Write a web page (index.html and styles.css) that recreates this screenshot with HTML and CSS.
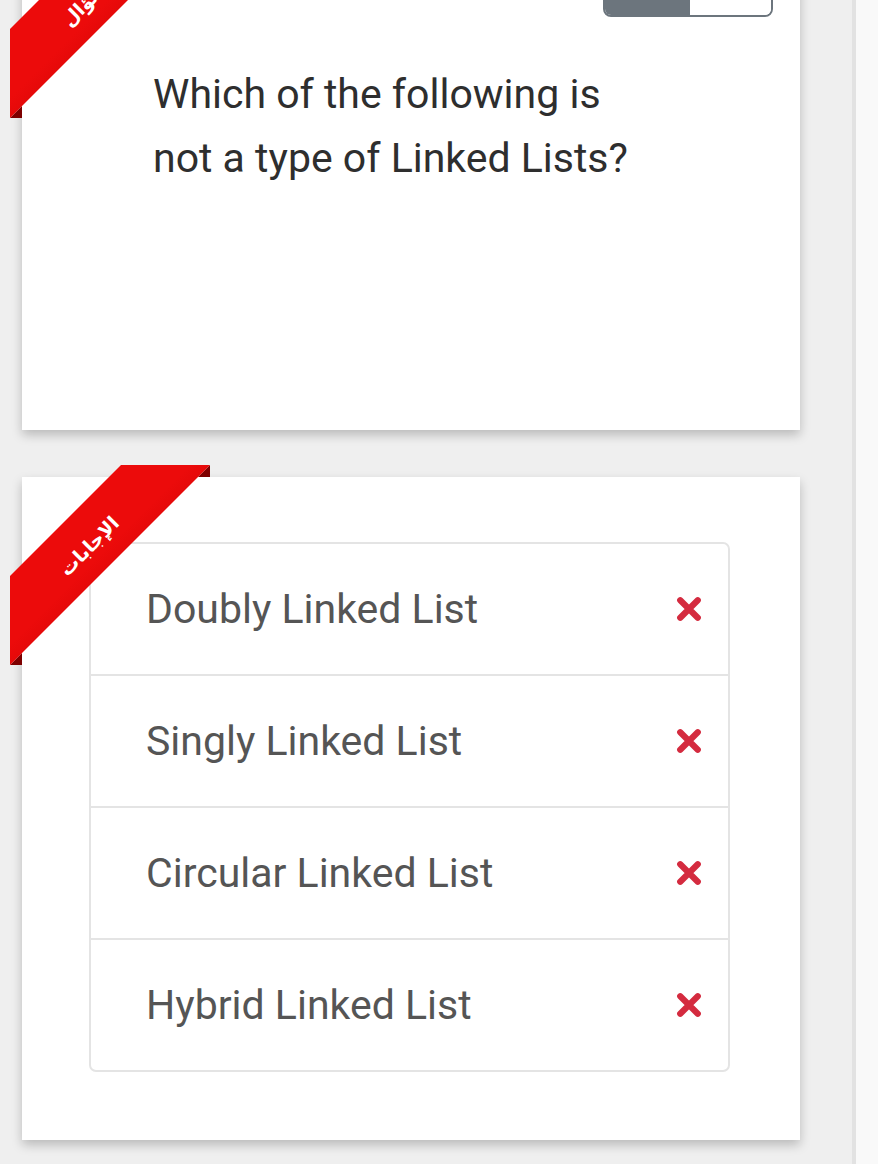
FILE: index.html
```html
<!DOCTYPE html>
<html lang="en">
<head>
<meta charset="utf-8">
<title>Quiz</title>
<link rel="stylesheet" href="styles.css">
</head>
<body>
<div class="page">
  <main class="main">
    <section class="card card-question">
      <svg class="ribbon" width="212" height="212" viewBox="0 0 212 212">
        <defs>
          <linearGradient id="rg1" x1="0" y1="0" x2="1" y2="1">
            <stop offset="0.45" stop-color="#ec0b0b"/>
            <stop offset="0.78" stop-color="#c00000"/>
          </linearGradient>
        </defs>
        <polygon class="fold" points="200,0 200,12 188,12"/>
        <polygon class="fold" points="0,200 12,200 12,188"/>
        <polygon points="111,0 200,0 0,200 0,111" fill="url(#rg1)"/>
        <text class="ribbon-text" x="0" y="0" transform="translate(80 82) rotate(-45)">السؤال</text>
      </svg>
      <div class="card-top">
        <div class="toggle"><span class="toggle-on"></span><span class="toggle-off"></span></div>
      </div>
      <p class="question">Which of the following is<br>not a type of Linked Lists?</p>
    </section>

    <section class="card card-answers">
      <svg class="ribbon" width="212" height="212" viewBox="0 0 212 212">
        <defs>
          <linearGradient id="rg2" x1="0" y1="0" x2="1" y2="1">
            <stop offset="0.45" stop-color="#ec0b0b"/>
            <stop offset="0.78" stop-color="#c00000"/>
          </linearGradient>
        </defs>
        <polygon class="fold" points="200,0 200,12 188,12"/>
        <polygon class="fold" points="0,200 12,200 12,188"/>
        <polygon points="111,0 200,0 0,200 0,111" fill="url(#rg2)"/>
        <text class="ribbon-text" x="0" y="0" transform="translate(80 82) rotate(-45)">الإجابات</text>
      </svg>
      <ul class="answers">
        <li class="answer"><span>Doubly Linked List</span><svg class="x" viewBox="0 0 24 24"><path d="M5 5L19 19M19 5L5 19"/></svg></li>
        <li class="answer"><span>Singly Linked List</span><svg class="x" viewBox="0 0 24 24"><path d="M5 5L19 19M19 5L5 19"/></svg></li>
        <li class="answer"><span>Circular Linked List</span><svg class="x" viewBox="0 0 24 24"><path d="M5 5L19 19M19 5L5 19"/></svg></li>
        <li class="answer"><span>Hybrid Linked List</span><svg class="x" viewBox="0 0 24 24"><path d="M5 5L19 19M19 5L5 19"/></svg></li>
      </ul>
    </section>
  </main>
  <aside class="side"></aside>
</div>
</body>
</html>
```

FILE: styles.css
```css
html, body {
  margin: 0;
  padding: 0;
}
body {
  background: #efefef;
  font-family: Roboto, "Noto Sans", sans-serif;
  overflow: hidden;
}
.page {
  display: flex;
  height: 1164px;
  overflow: hidden;
}
.main {
  width: 852px;
  flex: none;
  box-sizing: border-box;
  padding: 0 52px 0 22px;
  display: flex;
  flex-direction: column;
  gap: 47px;
}
.side {
  flex: 1;
  border-left: 4px solid #e2e2e2;
  background: #f9f9f9;
}
.card {
  position: relative;
  background: #fff;
  box-sizing: border-box;
  box-shadow: 0 5px 10px rgba(0, 0, 0, 0.22);
  flex: none;
}
.ribbon {
  position: absolute;
  left: -12px;
  top: -12px;
  overflow: visible;
  z-index: 2;
}
.fold {
  fill: #7d0000;
}
.ribbon-text {
  fill: #fff;
  font-family: "DejaVu Sans", sans-serif;
  font-size: 19px;
  font-weight: bold;
  text-anchor: middle;
  dominant-baseline: middle;
}
.card-question {
  margin-top: -70px;
  height: 500px;
  padding: 47px 27px 0 131px;
}
.card-top {
  display: flex;
  justify-content: flex-end;
}
.toggle {
  display: flex;
  width: 170px;
  height: 40px;
  border-radius: 8px;
  overflow: hidden;
  border: 2px solid #6c757d;
  box-sizing: border-box;
}
.toggle-on {
  flex: 0 0 85px;
  background: #6c757d;
}
.toggle-off {
  flex: 1;
  background: #fff;
}
.question {
  margin: 45px 0 0;
  font-size: 41px;
  line-height: 64px;
  color: #2e2e2e;
}
.card-answers {
  height: 663px;
  padding: 65px 70px 0 67px;
}
.answers {
  list-style: none;
  margin: 0;
  padding: 0;
  border: 2px solid #e4e4e4;
  border-radius: 7px;
}
.answer {
  display: flex;
  align-items: center;
  justify-content: space-between;
  height: 130px;
  padding: 0 24px 0 55px;
  font-size: 41px;
  color: #555;
}
.answer + .answer {
  border-top: 2px solid #e4e4e4;
}
.x {
  width: 30px;
  height: 30px;
  fill: none;
  stroke: #d42b3f;
  stroke-width: 5;
  stroke-linecap: round;
}
```
